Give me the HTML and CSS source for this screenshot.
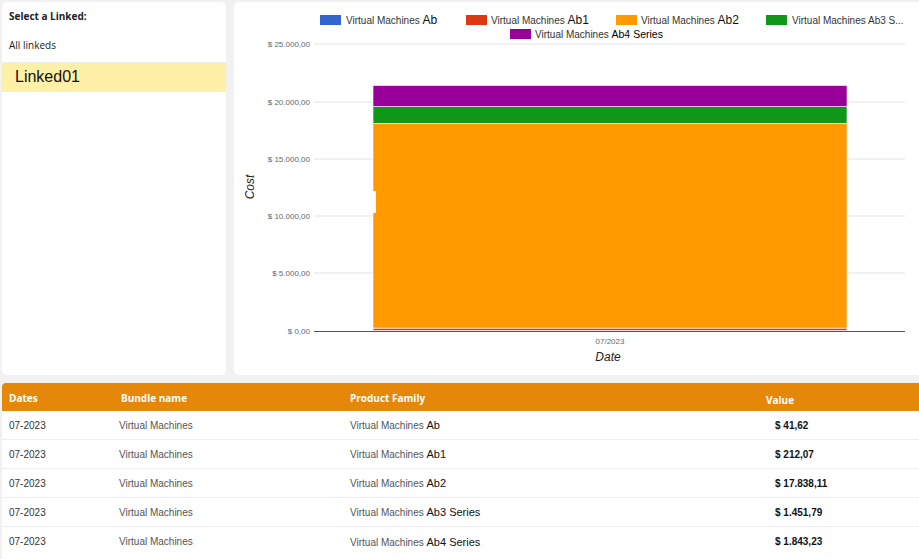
FILE: index.html
```html
<!DOCTYPE html>
<html>
<head>
<meta charset="utf-8">
<link rel="stylesheet" href="styles.css">
</head>
<body>
<div class="top">
  <aside class="picker">
    <div class="picker-title">Select a Linked:</div>
    <div class="picker-all">All linkeds</div>
    <div class="picker-item">Linked01</div>
  </aside>
  <section class="chart">
    <svg class="chart-svg" width="685" height="373" viewBox="0 0 685 373">
      <g class="legend">
        <rect x="86" y="13" width="21" height="10" fill="#3366cc"/>
        <text x="112" y="22"><tspan class="lg-a">Virtual Machines </tspan><tspan class="lg-b">Ab</tspan></text>
        <rect x="232" y="13" width="21" height="10" fill="#dc3912"/>
        <text x="257" y="22"><tspan class="lg-a">Virtual Machines </tspan><tspan class="lg-b">Ab1</tspan></text>
        <rect x="382" y="13" width="21" height="10" fill="#ff9900"/>
        <text x="407" y="22"><tspan class="lg-a">Virtual Machines </tspan><tspan class="lg-b">Ab2</tspan></text>
        <rect x="532" y="13" width="21" height="10" fill="#109618"/>
        <text x="558" y="22"><tspan class="lg-a">Virtual Machines Ab3 S...</tspan></text>
        <rect x="276" y="27" width="21" height="10" fill="#990099"/>
        <text x="301" y="36"><tspan class="lg-a">Virtual Machines </tspan><tspan class="lg-c">Ab4 Series</tspan></text>
      </g>
      <g class="grid">
        <line x1="80" x2="671" y1="42" y2="42"/>
        <line x1="80" x2="671" y1="100" y2="100"/>
        <line x1="80" x2="671" y1="157" y2="157"/>
        <line x1="80" x2="671" y1="214" y2="214"/>
        <line x1="80" x2="671" y1="271" y2="271"/>
      </g>
      <g class="ylab">
        <text x="76" y="45">$ 25.000,00</text>
        <text x="76" y="103">$ 20.000,00</text>
        <text x="76" y="160">$ 15.000,00</text>
        <text x="76" y="217">$ 10.000,00</text>
        <text x="76" y="274">$ 5.000,00</text>
        <text x="76" y="332">$ 0,00</text>
      </g>
      <g class="bars">
        <rect x="139" y="328.5" width="474" height="0.5" fill="#3366cc"/>
        <rect x="139" y="326.1" width="474" height="2.4" fill="#dc3912"/>
        <rect x="139" y="121.3" width="474" height="204.8" fill="#ff9900"/>
        <rect x="139" y="104.6" width="474" height="16.7" fill="#109618"/>
        <rect x="139" y="83.5" width="474" height="21.1" fill="#990099"/>
      </g>
      <rect x="139" y="189" width="3" height="22" fill="#ffffff"/>
      <line class="baseline" x1="80" x2="671" y1="329.5" y2="329.5"/>
      <text class="xlab" x="376" y="342">07/2023</text>
      <text class="axis-title" x="374" y="359">Date</text>
      <text class="axis-title" transform="translate(20 185) rotate(-90)" x="0" y="0">Cost</text>
    </svg>
  </section>
</div>
<div class="table">
  <div class="row head">
    <div>Dates</div><div class="bn">Bundle name</div><div>Product Family</div><div class="val">Value</div>
  </div>
  <div class="row">
    <div class="date">07-2023</div><div class="bundle">Virtual Machines</div><div class="fam">Virtual Machines <span>Ab</span></div><div class="val">$ 41,62</div>
  </div>
  <div class="row">
    <div class="date">07-2023</div><div class="bundle">Virtual Machines</div><div class="fam">Virtual Machines <span>Ab1</span></div><div class="val">$ 212,07</div>
  </div>
  <div class="row">
    <div class="date">07-2023</div><div class="bundle">Virtual Machines</div><div class="fam">Virtual Machines <span>Ab2</span></div><div class="val">$ 17.838,11</div>
  </div>
  <div class="row">
    <div class="date">07-2023</div><div class="bundle">Virtual Machines</div><div class="fam">Virtual Machines <span>Ab3 Series</span></div><div class="val">$ 1.451,79</div>
  </div>
  <div class="row">
    <div class="date">07-2023</div><div class="bundle">Virtual Machines</div><div class="fam">Virtual Machines <span>Ab4 Series</span></div><div class="val">$ 1.843,23</div>
  </div>
</div>
</body>
</html>
```
FILE: styles.css
```css
* { box-sizing: border-box; }
html, body { margin: 0; padding: 0; }
body {
  background: #f1f1f1;
  width: 919px;
  height: 559px;
  overflow: hidden;
  font-family: "Liberation Sans", Arial, sans-serif;
}
.top {
  display: flex;
  gap: 8px;
  padding: 2px 0 0 2px;
  height: 375px;
}
.picker {
  width: 224px;
  background: #fff;
  border-radius: 5px;
}
.picker-title {
  font-family: "Open Sans", sans-serif;
  font-weight: 700;
  font-size: 10px;
  color: #222;
  padding: 7px 0 0 7px;
  height: 32px;
}
.picker-all {
  font-family: "Open Sans", sans-serif;
  font-size: 10px;
  color: #222;
  padding: 4px 0 0 7px;
  height: 28px;
}
.picker-item {
  background: #fef0a7;
  border-top: 2px solid #ececec;
  height: 30px;
  padding: 4px 0 0 13px;
  font-size: 16px;
  color: #111;
}
.chart {
  flex: 1;
  background: #fff;
  border-radius: 5px 0 0 5px;
  overflow: hidden;
}
.chart-svg { display: block; font-family: "Liberation Sans", Arial, sans-serif; }
.lg-a { font-size: 10px; fill: #333; }
.lg-b { font-size: 12px; fill: #111; }
.lg-c { font-size: 10.5px; fill: #000; }
.grid line { stroke: #e3e3e3; stroke-width: 1; }
.ylab text { font-size: 8px; fill: #666; text-anchor: end; }
.bars rect { stroke: #fff; stroke-width: 0.6; }
.baseline { stroke: #555; stroke-width: 1; }
.xlab { font-size: 8px; fill: #666; text-anchor: middle; }
.axis-title { font-size: 12px; font-style: italic; fill: #222; text-anchor: middle; }
.table {
  margin: 8px 0 0 2px;
  background: #fff;
  border-radius: 4px 0 0 0;
  overflow: hidden;
  height: 176px;
}
.row {
  display: grid;
  grid-template-columns: 110px 231px 415px 1fr;
  padding-left: 7px;
  height: 29px;
  align-items: center;
  border-bottom: 1px solid #efefef;
  font-size: 10px;
}
.row.head {
  background: #e5880a;
  height: 28px;
  border-bottom: none;
  font-family: "Open Sans", sans-serif;
  font-weight: 700;
  font-size: 10px;
  color: #fff;
  padding-top: 1px;
}
.row.head .bn { padding-left: 2px; }
.row.head .val { padding-left: 1px; padding-top: 4px; }
.date { color: #333; }
.bundle { color: #555; }
.fam { color: #555; }
.fam span { font-size: 11px; color: #111; }
.row .val { padding-left: 10px; }
.row:not(.head) .val { font-weight: 700; color: #111; }
.row:last-child { border-bottom: none; }
```
